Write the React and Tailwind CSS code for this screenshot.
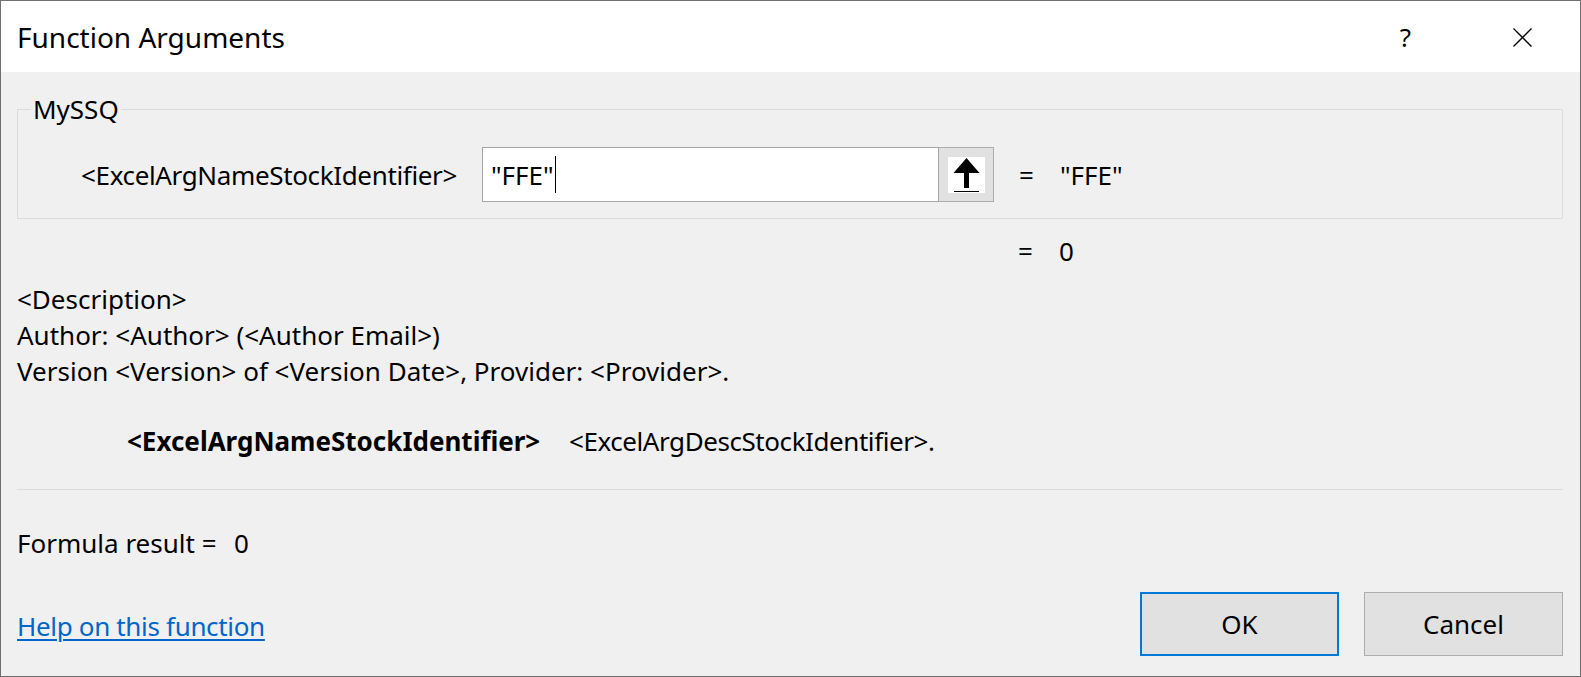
export default function App() {
  return (
    <div className="w-[1581px] h-[677px] border border-[#6f6f6f] bg-[#f0f0f0] flex flex-col overflow-hidden text-black font-['Noto_Sans',sans-serif] text-[26px] leading-[36px]">
      {/* Title bar */}
      <div className="h-[71px] shrink-0 bg-white flex items-center pl-[16px] pt-[1px]">
        <span className="text-[28px] leading-none">Function Arguments</span>
        <span className="ml-auto text-[26px] leading-none">?</span>
        <svg className="ml-[102px] mr-[48px]" width="19" height="19" viewBox="0 0 19 19">
          <line x1="0.5" y1="0.5" x2="18.5" y2="18.5" stroke="#000" strokeWidth="1.3" />
          <line x1="18.5" y1="0.5" x2="0.5" y2="18.5" stroke="#000" strokeWidth="1.3" />
        </svg>
      </div>

      {/* Body */}
      <div className="flex flex-col pl-[16px] pr-[17px]">
        <fieldset className="mt-[19px] border border-[#dcdcdc] pt-[20px] pb-[16px] px-0">
          <legend className="ml-[13px] px-[2px] leading-[36px]">MySSQ</legend>
          <div className="flex items-center pl-[63px]">
            <span className="w-[401px] shrink-0 tracking-[-0.35px]">&lt;ExcelArgNameStockIdentifier&gt;</span>
            <div className="w-[457px] h-[55px] shrink-0 bg-white border border-[#a6a6a6] flex items-center pl-[8px]">
              <span>"FFE"</span>
              <span className="ml-[1px] w-px h-[37px] bg-black" />
            </div>
            <div className="w-[55px] h-[55px] shrink-0 bg-[#e1e1e1] border-y border-r border-[#adadad] flex items-center justify-center">
              <svg width="37" height="36" viewBox="0 0 37 36">
                <rect x="0" y="0" width="37" height="36" fill="#fff" />
                <polygon points="18.5,1 5.5,16 31.5,16" fill="#000" />
                <rect x="16" y="15" width="5" height="16" fill="#000" />
                <rect x="6" y="34" width="25" height="1" fill="#000" />
              </svg>
            </div>
            <span className="ml-[25px]">=</span>
            <span className="ml-[26px]">"FFE"</span>
          </div>
        </fieldset>

        <div className="mt-[14px] flex pl-[1001px]">
          <span>=</span>
          <span className="ml-[26px]">0</span>
        </div>

        <div className="mt-[12px] flex flex-col">
          <span>&lt;Description&gt;</span>
          <span>Author: &lt;Author&gt; (&lt;Author Email&gt;)</span>
          <span>Version &lt;Version&gt; of &lt;Version Date&gt;, Provider: &lt;Provider&gt;.</span>
        </div>

        <div className="mt-[34px] flex pl-[110px]">
          <span className="w-[442px] shrink-0 font-bold">&lt;ExcelArgNameStockIdentifier&gt;</span>
          <span className="tracking-[-0.43px]">&lt;ExcelArgDescStockIdentifier&gt;.</span>
        </div>

        <div className="mt-[30px] h-px bg-[#dcdcdc]" />

        <div className="mt-[35px] flex">
          <span className="w-[217px] shrink-0">Formula result =</span>
          <span>0</span>
        </div>

        <div className="mt-[31px] flex items-start">
          <a href="#" className="mt-[16px] text-[#0066cc] tracking-[-0.33px] underline decoration-[2px] underline-offset-[3px]">
            Help on this function
          </a>
          <div className="ml-auto flex gap-[25px]">
            <button className="w-[199px] h-[64px] bg-[#e1e1e1] border-2 border-[#0078d7] flex items-center justify-center">
              OK
            </button>
            <button className="w-[199px] h-[64px] bg-[#e1e1e1] border border-[#adadad] flex items-center justify-center">
              Cancel
            </button>
          </div>
        </div>
      </div>
    </div>
  );
}
